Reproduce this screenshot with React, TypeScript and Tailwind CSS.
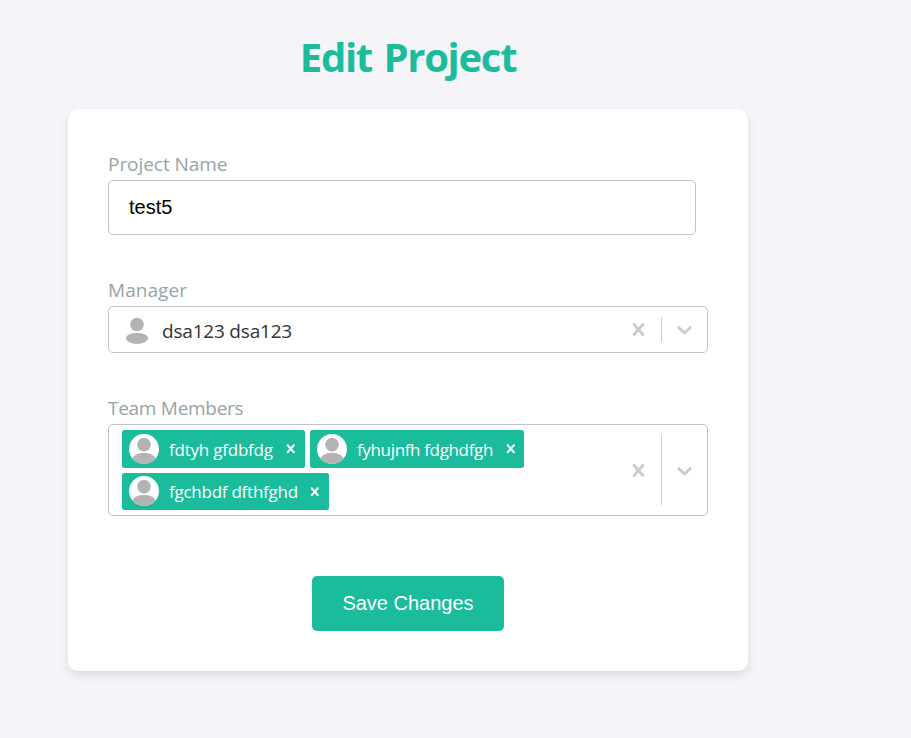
import React from "react";

const CROSS =
  "M14.348 14.849c-0.469 0.469-1.229 0.469-1.697 0l-2.651-3.030-2.651 3.029c-0.469 0.469-1.229 0.469-1.697 0-0.469-0.469-0.469-1.229 0-1.697l2.758-3.15-2.759-3.152c-0.469-0.469-0.469-1.228 0-1.697s1.228-0.469 1.697 0l2.652 3.031 2.651-3.031c0.469-0.469 1.228-0.469 1.697 0s0.469 1.229 0 1.697l-2.758 3.152 2.758 3.15c0.469 0.469 0.469 1.229 0 1.698z";
const CHEVRON =
  "M4.516 7.548c0.436-0.446 1.043-0.481 1.576 0l3.908 3.747 3.908-3.747c0.533-0.481 1.141-0.446 1.574 0 0.436 0.445 0.408 1.197 0 1.615-0.406 0.418-4.695 4.502-4.695 4.502-0.217 0.223-0.502 0.335-0.787 0.335s-0.57-0.112-0.789-0.335c0 0-4.287-4.084-4.695-4.502s-0.436-1.17 0-1.615z";

function Glyph({ d, className }: { d: string; className: string }) {
  return (
    <svg viewBox="0 0 20 20" fill="currentColor" className={className}>
      <path d={d} />
    </svg>
  );
}

function Indicators({ divider }: { divider: string }) {
  return (
    <div className="flex shrink-0 items-center text-[#cccccc]">
      <Glyph d={CROSS} className="mr-[10px] size-[25px]" />
      <span className={`w-px bg-[#cccccc] ${divider}`} />
      <Glyph d={CHEVRON} className="mx-[10px] size-[25px]" />
    </div>
  );
}

function Chip({ name, className, textClass, crossClass }: { name: string; className: string; textClass: string; crossClass: string }) {
  return (
    <div className={`flex items-start rounded-[2.5px] bg-[#1abc9c] pl-[7px] text-white ${className}`}>
      <svg viewBox="0 0 30 30" className="mr-[10px] size-[30px] shrink-0 overflow-hidden rounded-full">
        <rect width="30" height="30" fill="#fff" />
        <circle cx="15" cy="10.6" r="6.8" fill="#b3b3b3" />
        <ellipse cx="15" cy="25.5" rx="11.5" ry="6.8" fill="#b3b3b3" />
      </svg>
      <span className={`grow whitespace-nowrap text-[17px] leading-[24px] ${textClass}`}>{name}</span>
      <Glyph d={CROSS} className={`size-[17.5px] shrink-0 ${crossClass}`} />
    </div>
  );
}

function Label({ children, className }: { children: React.ReactNode; className: string }) {
  return (
    <div className={`h-[26px] whitespace-nowrap text-[19px] leading-[26px] text-[#95a5a6] ${className}`}>{children}</div>
  );
}

export default function App() {
  return (
    <div className="flex h-[738px] w-[911px] flex-col overflow-hidden bg-[#f4f4f9] pl-[68px] font-['Open_Sans',sans-serif]">
      <h1 className="mt-[30px] h-[54px] w-[680px] text-center text-[40px] font-bold leading-[54px] tracking-[-1.3px] text-[#1abc9c] [word-spacing:2.5px]">
        Edit Project
      </h1>
      <div className="mt-[25px] flex h-[562px] w-[680px] flex-col rounded-[10px] bg-white px-10 pt-[42px] shadow-[0_5px_10px_rgba(0,0,0,0.1)]">
        <Label className="tracking-[-0.05px]">Project Name</Label>
        <input
          defaultValue="test5"
          className="mt-[3px] h-[55px] w-[588px] rounded-[5px] border border-[#bdc3c7] px-[20px] font-['Liberation_Sans',Arial,sans-serif] text-[20px] text-black outline-none"
        />
        <Label className="mt-[42px] tracking-[0.05px]">Manager</Label>
        <div className="mt-[3px] flex h-[47px] w-[600px] items-center rounded-[5px] border border-[#bdc3c7] pl-[13px]">
          <svg viewBox="0 0 30 30" className="mr-[10px] size-[30px]">
            <circle cx="15" cy="9.5" r="6.8" fill="#b3b3b3" />
            <ellipse cx="15" cy="23.3" rx="11.1" ry="5.6" fill="#b3b3b3" />
          </svg>
          <span className="grow pt-[3px] text-[19px] tracking-[-0.2px] text-[#333333]">dsa123 dsa123</span>
          <Indicators divider="h-[25px]" />
        </div>
        <Label className="mt-[42px] tracking-[-0.28px]">Team Members</Label>
        <div className="mt-[3px] flex h-[92px] w-[600px] items-center rounded-[5px] border border-[#bdc3c7] pl-[13px]">
          <div className="flex grow flex-wrap gap-[5px]">
            <Chip name="fdtyh gfdbfdg" className="h-[38px] w-[183px] pt-1" textClass="pt-[4px] tracking-[-0.22px]" crossClass="mt-[6px] mr-[6px]" />
            <Chip name="fyhujnfh fdghdfgh" className="h-[38px] w-[214px] pt-1" textClass="pt-[4px] tracking-[-0.35px]" crossClass="mt-[6px] mr-[5px]" />
            <Chip name="fgchbdf dfthfghd" className="h-[37px] w-[207px] pt-[3px]" textClass="pt-[4px] tracking-[-0.25px]" crossClass="mt-[7px] mr-[6px]" />
          </div>
          <Indicators divider="h-[70px]" />
        </div>
        <button className="mt-[60px] h-[55px] w-[192px] self-center rounded-[5px] bg-[#1abc9c] pb-[2px] font-['Liberation_Sans',Arial,sans-serif] text-[20px] text-white">
          Save Changes
        </button>
      </div>
    </div>
  );
}
